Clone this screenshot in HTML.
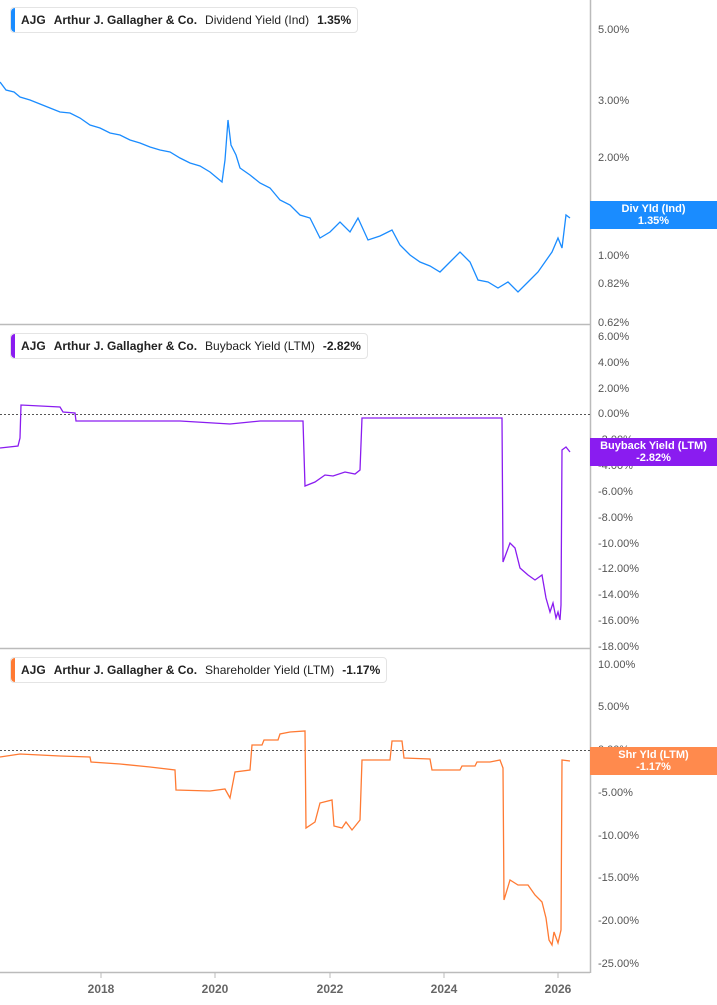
<!DOCTYPE html>
<html><head><meta charset="utf-8"><style>
body{margin:0;width:717px;height:1005px;background:#fff;font-family:"Liberation Sans",sans-serif;overflow:hidden;position:relative}
.leg{position:absolute;left:10px;height:24px;border:1px solid #e4e4e4;border-radius:4px;background:#fff;font-size:12px;color:#222;line-height:24px;padding-left:10px;padding-right:6px;white-space:nowrap}
.leg i{position:absolute;left:0;top:0;bottom:0;width:4px;border-radius:4px 0 0 4px}
.leg b{margin-right:8px}
.leg span{margin-right:8px}
.ax{position:absolute;left:598px;font-size:11px;color:#555;transform:translateY(-50%)}
.tag{position:absolute;left:590px;width:127px;color:#fff;font-size:11px;font-weight:bold;text-align:center;line-height:12px;padding:2px 0}
.yr{position:absolute;top:982px;font-size:12px;font-weight:bold;color:#666;transform:translateX(-50%)}
</style></head><body>
<svg width="717" height="1005" style="position:absolute;left:0;top:0">
<g stroke="#bbb" stroke-width="1.5" fill="none">
<line x1="590.5" y1="0" x2="590.5" y2="973"/>
<line x1="0" y1="324.5" x2="590" y2="324.5"/>
<line x1="0" y1="648.5" x2="590" y2="648.5"/>
<line x1="0" y1="972.5" x2="590" y2="972.5"/>
</g>
<g stroke="#bbb"><line x1="101" y1="973" x2="101" y2="978"/><line x1="215" y1="973" x2="215" y2="978"/><line x1="330" y1="973" x2="330" y2="978"/><line x1="444" y1="973" x2="444" y2="978"/><line x1="558" y1="973" x2="558" y2="978"/></g>
<g stroke="#555" stroke-dasharray="2,2"><line x1="0" y1="414.5" x2="590" y2="414.5"/><line x1="0" y1="750.5" x2="590" y2="750.5"/></g>
<polyline fill="none" stroke="#1a8cff" stroke-width="1.3" points="0,82 6,90 14,92 20,97 30,100 40,104 50,108 60,112 70,113 80,118 90,125 100,128 110,133 120,135 130,140 140,143 150,147 160,150 170,152 180,158 190,163 200,166 210,172 222,182 225,160 228,120 231,145 236,155 240,168 250,175 260,183 270,188 280,200 290,205 300,215 310,218 320,238 330,232 340,222 350,232 358,218 368,240 380,236 392,230 400,245 410,255 420,262 430,266 440,272 450,262 460,252 470,262 478,280 488,282 498,288 508,282 518,292 528,282 538,272 545,262 552,252 558,238 562,248 566,215 570,218"/>
<polyline fill="none" stroke="#8a1cf0" stroke-width="1.3" points="0,448 18,446 20,438 21,405 60,407 63,412 75,413 76,421 180,421 230,424 260,421 303,421 305,486 315,482 325,475 333,476 345,472 355,474 360,470 362,418 502,418 503,562 510,543 515,548 520,568 528,575 535,580 542,575 546,598 550,612 553,603 556,618 558,612 560,620 561,605 562,450 566,447 570,452"/>
<polyline fill="none" stroke="#ff7a33" stroke-width="1.3" points="0,757 20,754 40,755 60,756 90,757 91,762 120,764 150,767 175,770 176,790 210,791 225,789 230,798 235,772 250,770 252,745 262,745 264,740 278,740 280,734 290,732 305,731 306,828 315,822 320,803 332,800 334,826 342,828 346,822 352,830 360,820 362,760 390,760 392,741 402,741 404,758 430,759 432,770 460,770 462,766 475,766 477,762 490,762 500,760 503,768 504,900 510,880 518,885 528,885 535,895 542,902 546,918 549,940 552,945 554,932 558,943 561,930 562,760 570,761"/>
</svg>
<div class="leg" style="top:7px"><i style="background:#1a8cff"></i><b>AJG</b><b>Arthur J. Gallagher &amp; Co.</b><span>Dividend Yield (Ind)</span><b style="margin:0">1.35%</b></div>
<div class="leg" style="top:333px"><i style="background:#8a1cf0"></i><b>AJG</b><b>Arthur J. Gallagher &amp; Co.</b><span>Buyback Yield (LTM)</span><b style="margin:0">-2.82%</b></div>
<div class="leg" style="top:657px"><i style="background:#ff7a33"></i><b>AJG</b><b>Arthur J. Gallagher &amp; Co.</b><span>Shareholder Yield (LTM)</span><b style="margin:0">-1.17%</b></div>
<div class="ax" style="top:30px">5.00%</div><div class="ax" style="top:101px">3.00%</div><div class="ax" style="top:158px">2.00%</div><div class="ax" style="top:256px">1.00%</div><div class="ax" style="top:284px">0.82%</div><div class="ax" style="top:323px">0.62%</div>
<div class="ax" style="top:337px">6.00%</div><div class="ax" style="top:363px">4.00%</div><div class="ax" style="top:389px">2.00%</div><div class="ax" style="top:414px">0.00%</div><div class="ax" style="top:440px">-2.00%</div><div class="ax" style="top:466px">-4.00%</div><div class="ax" style="top:492px">-6.00%</div><div class="ax" style="top:518px">-8.00%</div><div class="ax" style="top:544px">-10.00%</div><div class="ax" style="top:569px">-12.00%</div><div class="ax" style="top:595px">-14.00%</div><div class="ax" style="top:621px">-16.00%</div><div class="ax" style="top:647px">-18.00%</div>
<div class="ax" style="top:665px">10.00%</div><div class="ax" style="top:707px">5.00%</div><div class="ax" style="top:750px">0.00%</div><div class="ax" style="top:793px">-5.00%</div><div class="ax" style="top:836px">-10.00%</div><div class="ax" style="top:878px">-15.00%</div><div class="ax" style="top:921px">-20.00%</div><div class="ax" style="top:964px">-25.00%</div>
<div class="tag" style="top:201px;background:#1a8cff">Div Yld (Ind)<br>1.35%</div>
<div class="tag" style="top:438px;background:#8a1cf0">Buyback Yield (LTM)<br>-2.82%</div>
<div class="tag" style="top:747px;background:#ff8a4d">Shr Yld (LTM)<br>-1.17%</div>
<div class="yr" style="left:101px">2018</div><div class="yr" style="left:215px">2020</div><div class="yr" style="left:330px">2022</div><div class="yr" style="left:444px">2024</div><div class="yr" style="left:558px">2026</div>
</body></html>
